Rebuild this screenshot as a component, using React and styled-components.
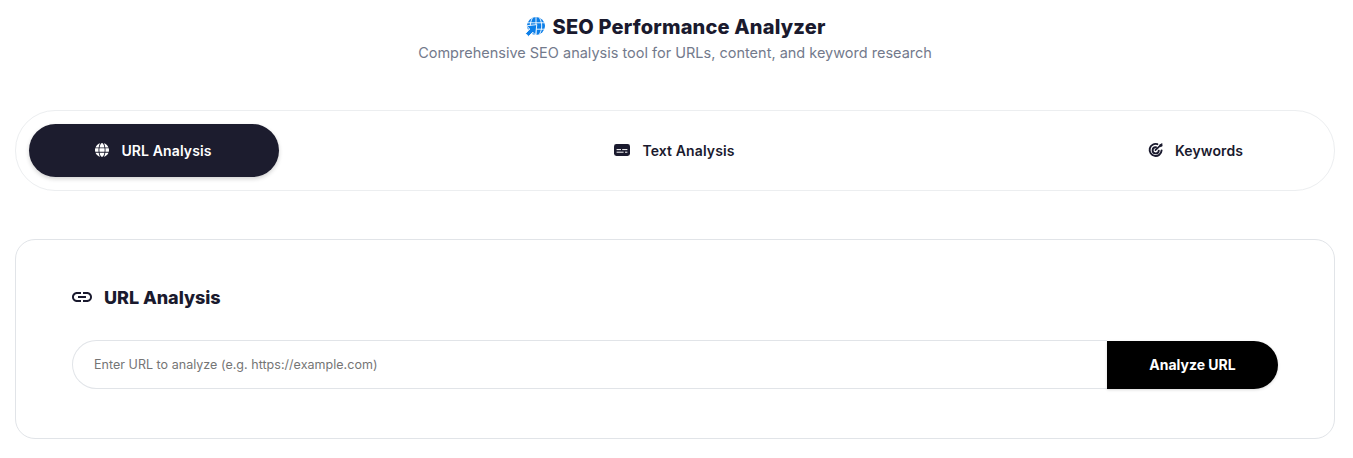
import React from "react";
import styled, { createGlobalStyle } from "styled-components";
import { FaGlobe } from "react-icons/fa6";
import { MdLink } from "react-icons/md";

const Global = createGlobalStyle`
  html, body { margin: 0; padding: 0; background: #fff; }
  body { font-family: Inter, "Liberation Sans", sans-serif; color: #1a1a2e; }
`;
const Page = styled.div`
  width: 1353px; height: 458px; box-sizing: border-box; padding: 0 18px 0 15px; overflow: hidden;
`;
const Header = styled.header`
  display: flex; flex-direction: column; align-items: center; padding-top: 14px; height: 110px; box-sizing: border-box;
`;
const Title = styled.h1`
  display: flex; align-items: center; gap: 8px; margin: 0; height: 26px;
  font-size: 20px; font-weight: 800; line-height: 26px; color: #1a1a2e; letter-spacing: 0.18px;
`;
const Subtitle = styled.p`
  margin: 3px 0 0; font-size: 14.5px; line-height: 20px; color: #737a8c;
`;
const Tabs = styled.nav`
  display: flex; justify-content: space-between; height: 81px; box-sizing: border-box; padding: 13px;
  border: 1px solid #eceef0; border-radius: 40px; background: #fff;
`;
const Tab = styled.button`
  flex: 0 0 250px; height: 53px; border: 0; border-radius: 27px; padding: 0 1px 1px 0;
  display: flex; align-items: center; justify-content: center; gap: 12px;
  font: 600 14px Inter, "Liberation Sans", sans-serif; letter-spacing: 0.12px;
  background: ${p => (p.$active ? "#1c1c2e" : "transparent")};
  color: ${p => (p.$active ? "#fff" : "#1a1a2e")};
  box-shadow: ${p => (p.$active ? "0 2px 4px rgba(0,0,0,.18)" : "none")};
`;
const Card = styled.section`
  margin-top: 48px; height: 200px; box-sizing: border-box; padding: 40px 56px 0;
  border: 1px solid #e1e4e8; border-radius: 20px; background: #fff;
`;
const CardTitle = styled.h2`
  display: flex; align-items: center; gap: 10px; margin: 0; height: 34px;
  font-size: 18px; font-weight: 800; color: #1a1a2e; letter-spacing: -0.05px;
  svg { margin-left: -2px; }
`;
const Form = styled.form`
  display: flex; align-items: flex-end; margin-top: 26px; height: 49px;
`;
const UrlInput = styled.input`
  flex: 1; min-width: 0; box-sizing: border-box; height: 49px; padding: 0 21px;
  border: 1px solid #e1e4e8; border-right: 0; border-radius: 25px 0 0 25px; outline: 0;
  font: 400 12.5px Inter, "Liberation Sans", sans-serif; letter-spacing: 0.03px;
  &::placeholder { color: #757575; opacity: 1; }
`;
const Submit = styled.button`
  flex: 0 0 171px; height: 48px; border: 0; border-radius: 0 25px 25px 0; padding: 0 0 2px; background: #000; color: #fff;
  font: 700 14px Inter, "Liberation Sans", sans-serif; box-shadow: 0 1px 3px rgba(0,0,0,.15);
`;

const LogoIcon = () => (
  <svg width="20" height="20" viewBox="0 0 20 20" fill="none" aria-hidden="true">
    <circle cx="11" cy="9" r="9" fill="#0d7fe8" />
    <path d="M11 0v18M2 5.8h18M2 12.2h18M7.4 1c-2.8 5-2.8 11 0 16M14.6 1c2.8 5 2.8 11 0 16" stroke="#fff" strokeWidth="0.9" />
    <path d="M11.8 7.6 1.4 8.8 4.8 12 0.6 16.4 3.6 19.4 7.8 15.2 10.6 18.2Z" fill="#0d7fe8" stroke="#fff" strokeWidth="0.9" strokeLinejoin="round" />
  </svg>
);
const TextIcon = () => (
  <svg width="16" height="16" viewBox="0 0 16 16" aria-hidden="true">
    <rect x="0" y="2" width="16" height="12" rx="2.4" fill="currentColor" />
    <path d="M2.6 7.6h4.4M8.2 7.6h5.2M2.6 10.2h7M11 10.2h2.4" stroke="#fff" strokeWidth="1" />
  </svg>
);
const KeywordIcon = () => (
  <svg width="15" height="16" viewBox="0 0 15 16" fill="none" aria-hidden="true">
    <g stroke="currentColor" strokeWidth="1.9" strokeLinecap="round">
      <path d="M9.4 2.2A6 6 0 1 0 13.6 8.4" />
      <path d="M8 5.2A3.1 3.1 0 1 0 10.8 8.6" />
      <path d="M7.4 8.2 13 2.8" strokeWidth="1.7" />
    </g>
    <path d="M11 3 14.2 1 14.6 4 12.6 5.2Z" fill="currentColor" />
  </svg>
);

export default function App() {
  return (
    <Page>
      <Global />
      <Header>
        <Title><LogoIcon />SEO Performance Analyzer</Title>
        <Subtitle>Comprehensive SEO analysis tool for URLs, content, and keyword research</Subtitle>
      </Header>
      <Tabs>
        <Tab $active><FaGlobe size={14} />URL Analysis</Tab>
        <Tab><TextIcon />Text Analysis</Tab>
        <Tab><KeywordIcon />Keywords</Tab>
      </Tabs>
      <Card>
        <CardTitle><MdLink size={24} />URL Analysis</CardTitle>
        <Form onSubmit={e => e.preventDefault()}>
          <UrlInput placeholder="Enter URL to analyze (e.g. https://example.com)" />
          <Submit>Analyze URL</Submit>
        </Form>
      </Card>
    </Page>
  );
}
